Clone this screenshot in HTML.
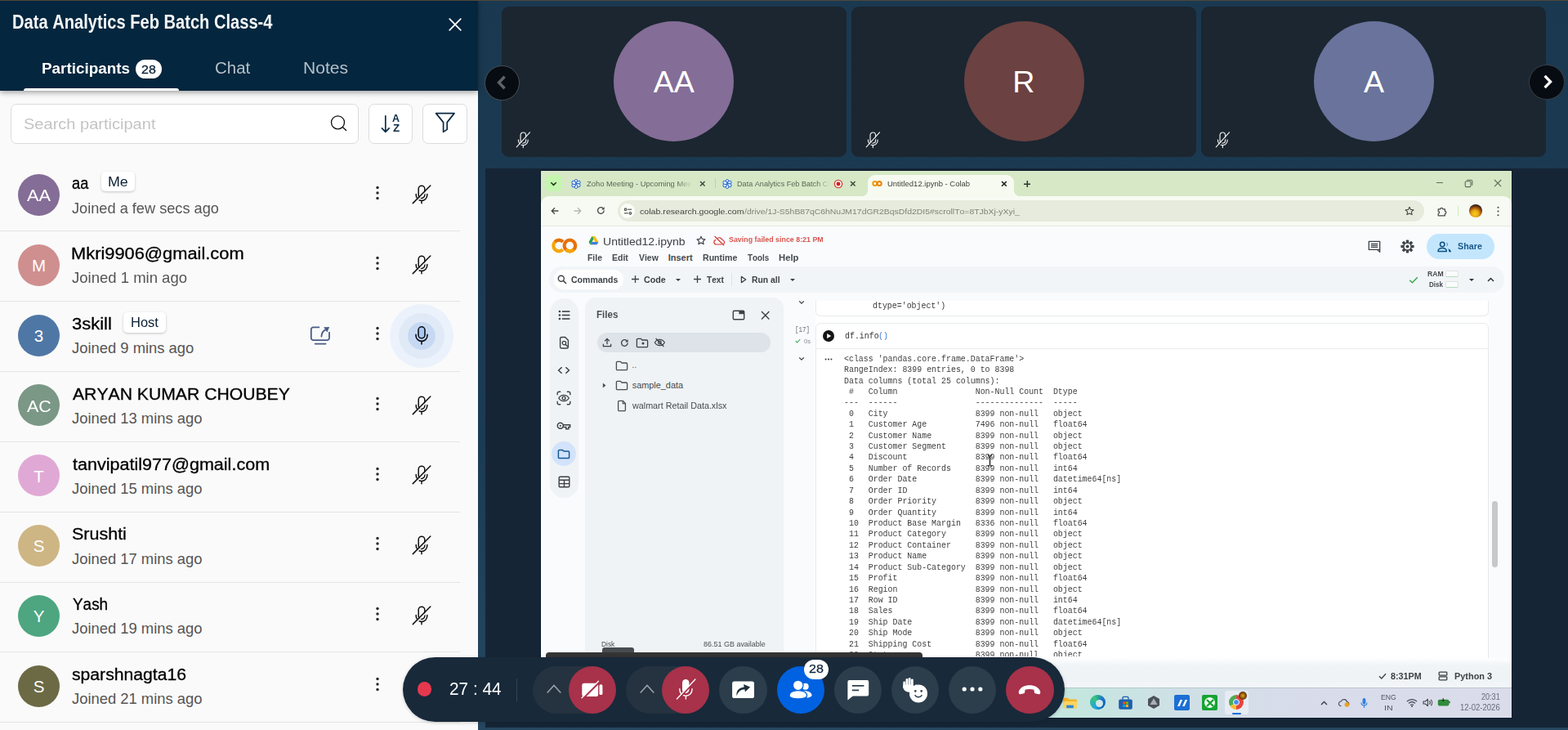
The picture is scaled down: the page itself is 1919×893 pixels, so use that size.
<!DOCTYPE html>
<html lang="en">
<head>
<meta charset="utf-8">
<title>Data Analytics Feb Batch Class-4</title>
<style>
*{margin:0;padding:0;box-sizing:content-box}
html,body{width:1919px;height:893px;overflow:hidden;background:#1b3b53}
body{position:relative;font-family:"Liberation Sans",sans-serif;font-kerning:none;-webkit-font-smoothing:antialiased}
.b{position:absolute;display:block}
.t{position:absolute;display:block;white-space:pre;font-weight:400;transform-origin:0 50%}
h1.t{font-weight:700}
#topline{position:absolute;left:0;top:0;width:1919px;height:1px;background:#51483a;z-index:50}
</style>
</head>
<body>
<div id="main">
<div class="b" style="left:585px;top:0px;width:1334px;height:893px;background:linear-gradient(180deg,#1a3950 0%,#1b3b53 60%,#254860 100%);"></div>
<div class="b" style="left:594px;top:206px;width:1325px;height:684px;background:#162536;"></div>
<div class="b" style="left:614px;top:8px;width:422px;height:184px;background:#1b2630;border-radius:9px;"></div>
<div class="b" style="left:751.2px;top:25.7px;width:147.2px;height:147.2px;background:#846d97;border-radius:50%;"></div>
<span class="t" style="left:799.72px;top:77.86px;font-size:37.6px;line-height:45px;color:#fff;">AA</span>
<svg class="b" style="left:629.68px;top:161.18px;" width="20.64" height="20.64" viewBox="0 0 24 24"><g fill="none" stroke="#f2f2f2" stroke-width="1.35" stroke-linecap="round"><rect x="8.2" y="1.2" width="7.6" height="15.2" rx="3.8"/><path d="M5.2 11.6v1a6.8 6.8 0 0 0 13.6 0v-1"/><path d="M12 19.6v3.2"/><path d="M20.6 2L3.6 21" stroke="#1b2630" stroke-width="1.55" stroke-linecap="butt" transform="translate(1.1 1.1)"/><path d="M21.6 1L2.6 22"/></g></svg>
<div class="b" style="left:1042px;top:8px;width:422px;height:184px;background:#1b2630;border-radius:9px;"></div>
<div class="b" style="left:1180px;top:25.7px;width:147.2px;height:147.2px;background:#6b4141;border-radius:50%;"></div>
<span class="t" style="left:1239.35px;top:77.86px;font-size:37.6px;line-height:45px;color:#fff;">R</span>
<svg class="b" style="left:1057.68px;top:161.18px;" width="20.64" height="20.64" viewBox="0 0 24 24"><g fill="none" stroke="#f2f2f2" stroke-width="1.35" stroke-linecap="round"><rect x="8.2" y="1.2" width="7.6" height="15.2" rx="3.8"/><path d="M5.2 11.6v1a6.8 6.8 0 0 0 13.6 0v-1"/><path d="M12 19.6v3.2"/><path d="M20.6 2L3.6 21" stroke="#1b2630" stroke-width="1.55" stroke-linecap="butt" transform="translate(1.1 1.1)"/><path d="M21.6 1L2.6 22"/></g></svg>
<div class="b" style="left:1470px;top:8px;width:422px;height:184px;background:#1b2630;border-radius:9px;"></div>
<div class="b" style="left:1608px;top:25.7px;width:147.2px;height:147.2px;background:#69739c;border-radius:50%;"></div>
<span class="t" style="left:1669.06px;top:77.86px;font-size:37.6px;line-height:45px;color:#fff;">A</span>
<svg class="b" style="left:1485.68px;top:161.18px;" width="20.64" height="20.64" viewBox="0 0 24 24"><g fill="none" stroke="#f2f2f2" stroke-width="1.35" stroke-linecap="round"><rect x="8.2" y="1.2" width="7.6" height="15.2" rx="3.8"/><path d="M5.2 11.6v1a6.8 6.8 0 0 0 13.6 0v-1"/><path d="M12 19.6v3.2"/><path d="M20.6 2L3.6 21" stroke="#1b2630" stroke-width="1.55" stroke-linecap="butt" transform="translate(1.1 1.1)"/><path d="M21.6 1L2.6 22"/></g></svg>
<div class="b" style="left:593.1px;top:79.6px;width:43.2px;height:43.2px;background:#070c12;border-radius:50%;border:1px solid #4a4f55;box-sizing:border-box;"></div>
<svg class="b" style="left:604px;top:91.2px;" width="20" height="20" viewBox="0 0 20 20"><path d="M13.6 2.8L6.6 10L13.6 17.2" fill="none" stroke="#606366" stroke-width="3.4"/></svg>
<div class="b" style="left:1871.4px;top:78.7px;width:43.2px;height:43.2px;background:#070c12;border-radius:50%;border:1px solid #3c4148;box-sizing:border-box;"></div>
<svg class="b" style="left:1883.6px;top:90.4px;" width="20" height="20" viewBox="0 0 20 20"><path d="M6.6 2.8L13.6 10L6.6 17.2" fill="none" stroke="#fff" stroke-width="3.3"/></svg>
</div>
<div id="screen">
<div class="b" style="left:661px;top:208px;width:1190px;height:671px;background:#0b1a2a;"></div>
<div class="b" style="left:662px;top:209px;width:1188px;height:669px;background:#f9fbfd;"></div>
<div class="b" style="left:662px;top:209px;width:1188px;height:40px;background:#d6e8c6;"></div>
<div class="b" style="left:667.7px;top:214.4px;width:20.2px;height:20px;background:#c5f6af;border-radius:5px;"></div>
<svg class="b" style="left:673.4px;top:221.8px;" width="9" height="6" viewBox="0 0 9 6"><path d="M1.3 1.2L4.5 4.4L7.7 1.2" fill="none" stroke="#1b3311" stroke-width="1.5"/></svg>
<svg class="b" style="left:699.2px;top:218.8px;" width="12" height="12" viewBox="0 0 12 12"><ellipse cx="6" cy="2.9" rx="1.9" ry="2.5" transform="rotate(0 6 6)" fill="#eaf2ff" stroke="#2f6fd0" stroke-width="1"/><ellipse cx="6" cy="2.9" rx="1.9" ry="2.5" transform="rotate(60 6 6)" fill="#eaf2ff" stroke="#2f6fd0" stroke-width="1"/><ellipse cx="6" cy="2.9" rx="1.9" ry="2.5" transform="rotate(120 6 6)" fill="#eaf2ff" stroke="#2f6fd0" stroke-width="1"/><ellipse cx="6" cy="2.9" rx="1.9" ry="2.5" transform="rotate(180 6 6)" fill="#eaf2ff" stroke="#2f6fd0" stroke-width="1"/><ellipse cx="6" cy="2.9" rx="1.9" ry="2.5" transform="rotate(240 6 6)" fill="#eaf2ff" stroke="#2f6fd0" stroke-width="1"/><ellipse cx="6" cy="2.9" rx="1.9" ry="2.5" transform="rotate(300 6 6)" fill="#eaf2ff" stroke="#2f6fd0" stroke-width="1"/></svg>
<span class="t" style="left:717.7px;top:220.05px;font-size:8.8px;line-height:11px;color:#596857;transform:scaleX(1.0654);-webkit-mask-image:linear-gradient(90deg,#000 86%,transparent 100%);">Zoho Meeting - Upcoming Mee</span>
<svg class="b" style="left:855.7px;top:221px;" width="7.6" height="7.6" viewBox="0 0 7.6 7.6"><path d="M1 1L6.6 6.6M6.6 1L1 6.6" stroke="#3c403c" stroke-width="1.4" fill="none"/></svg>
<div class="b" style="left:874.5px;top:218.4px;width:1.2px;height:12px;background:#b4d9a3;"></div>
<svg class="b" style="left:883.6px;top:218.8px;" width="12" height="12" viewBox="0 0 12 12"><ellipse cx="6" cy="2.9" rx="1.9" ry="2.5" transform="rotate(0 6 6)" fill="#eaf2ff" stroke="#2f6fd0" stroke-width="1"/><ellipse cx="6" cy="2.9" rx="1.9" ry="2.5" transform="rotate(60 6 6)" fill="#eaf2ff" stroke="#2f6fd0" stroke-width="1"/><ellipse cx="6" cy="2.9" rx="1.9" ry="2.5" transform="rotate(120 6 6)" fill="#eaf2ff" stroke="#2f6fd0" stroke-width="1"/><ellipse cx="6" cy="2.9" rx="1.9" ry="2.5" transform="rotate(180 6 6)" fill="#eaf2ff" stroke="#2f6fd0" stroke-width="1"/><ellipse cx="6" cy="2.9" rx="1.9" ry="2.5" transform="rotate(240 6 6)" fill="#eaf2ff" stroke="#2f6fd0" stroke-width="1"/><ellipse cx="6" cy="2.9" rx="1.9" ry="2.5" transform="rotate(300 6 6)" fill="#eaf2ff" stroke="#2f6fd0" stroke-width="1"/></svg>
<span class="t" style="left:901.85px;top:220.05px;font-size:8.8px;line-height:11px;color:#596857;transform:scaleX(1.0347);-webkit-mask-image:linear-gradient(90deg,#000 86%,transparent 100%);">Data Analytics Feb Batch Cl</span>
<svg class="b" style="left:1019.8px;top:218.8px;" width="12" height="12" viewBox="0 0 12 12"><circle cx="6" cy="6" r="4.7" fill="#fbeceb" stroke="#d3322c" stroke-width="1.1"/><circle cx="6" cy="6" r="2.4" fill="#d3201a"/></svg>
<svg class="b" style="left:1040.3px;top:221px;" width="7.6" height="7.6" viewBox="0 0 7.6 7.6"><path d="M1 1L6.6 6.6M6.6 1L1 6.6" stroke="#3c403c" stroke-width="1.4" fill="none"/></svg>
<div class="b" style="left:1061.6px;top:213.7px;width:179.6px;height:30px;background:#f6faf0;border-radius:9px 9px 0 0;"></div>
<div class="b" style="left:1054.6px;top:233.2px;width:7px;height:7px;background:radial-gradient(circle at 0 0,rgba(246,250,240,0) 6.6px,#f6faf0 7.2px);"></div>
<div class="b" style="left:1241.2px;top:233.2px;width:7px;height:7px;background:radial-gradient(circle at 100% 0,rgba(246,250,240,0) 6.6px,#f6faf0 7.2px);"></div>
<svg class="b" style="left:1067.2px;top:221.3px;" width="13" height="7" viewBox="0 0 13 7"><g fill="none" stroke-width="2"><circle cx="3.8" cy="3.5" r="2.5" stroke="#f29900"/><circle cx="9.2" cy="3.5" r="2.5" stroke="#ee8100"/></g></svg>
<span class="t" style="left:1085.57px;top:220.05px;font-size:8.8px;line-height:11px;color:#3b403b;transform:scaleX(1.0767);">Untitled12.ipynb - Colab</span>
<svg class="b" style="left:1224.5px;top:220.9px;" width="7.8" height="7.8" viewBox="0 0 7.8 7.8"><path d="M1 1L6.8 6.8M6.8 1L1 6.8" stroke="#222" stroke-width="1.6" fill="none"/></svg>
<svg class="b" style="left:1252.5px;top:220.5px;" width="8.6" height="8.6" viewBox="0 0 8.6 8.6"><path d="M4.3 0V8.6M0 4.3H8.6" stroke="#2e332e" stroke-width="1.5" fill="none"/></svg>
<div class="b" style="left:1757.6px;top:223px;width:8.6px;height:1.1px;background:#5f6b5a;"></div>
<svg class="b" style="left:1791.5px;top:218.8px;" width="11" height="11" viewBox="0 0 11 11"><rect x="1.2" y="2.8" width="6.8" height="6.8" rx="1.4" fill="none" stroke="#5f6b5a" stroke-width="1.1"/><path d="M3.2 1.2h5a1.6 1.6 0 0 1 1.6 1.6v5" fill="none" stroke="#5f6b5a" stroke-width="1.1"/></svg>
<svg class="b" style="left:1827.6px;top:219.3px;" width="10.2" height="10.2" viewBox="0 0 10.2 10.2"><path d="M1 1L9.2 9.2M9.2 1L1 9.2" stroke="#5f6b5a" stroke-width="1.1" fill="none"/></svg>
<div class="b" style="left:662px;top:240.2px;width:1188px;height:36px;background:#f7faf3;border-radius:10px 10px 0 0;"></div>
<svg class="b" style="left:674.3px;top:252.9px;" width="10" height="10" viewBox="0 0 10 10"><path d="M9.4 5H1.4M5 1.2L1.2 5L5 8.8" fill="none" stroke="#454a45" stroke-width="1.3"/></svg>
<svg class="b" style="left:701.8px;top:252.9px;" width="10" height="10" viewBox="0 0 10 10"><path d="M.6 5H8.6M5 1.2L8.8 5L5 8.8" fill="none" stroke="#b3b8b0" stroke-width="1.3"/></svg>
<svg class="b" style="left:729.5px;top:252.2px;" width="11" height="11" viewBox="0 0 11 11"><path d="M9.2 5.6a3.8 3.8 0 1 1-1.2-2.9" fill="none" stroke="#454a45" stroke-width="1.3"/><path d="M9.6 1v3.4H6.2z" fill="#454a45"/></svg>
<div class="b" style="left:755.8px;top:244.9px;width:987.4px;height:26.2px;background:#e6ebdd;border-radius:13.1px;"></div>
<div class="b" style="left:758.9px;top:248.8px;width:18.4px;height:18.4px;background:#fafcf6;border-radius:50%;"></div>
<svg class="b" style="left:762.6px;top:253.5px;" width="11" height="9" viewBox="0 0 11 9"><g fill="none" stroke="#454a45" stroke-width="1.1"><circle cx="2.6" cy="2.2" r="1.3"/><path d="M5.2 2.2H10"/><circle cx="8.4" cy="6.8" r="1.3"/><path d="M1 6.8H5.8"/></g></svg>
<span class="t" style="left:783.45px;top:253.1px;font-size:9.8px;line-height:12px;color:#3f443d;transform:scaleX(1.084);">colab.research.google.com</span>
<span class="t" style="left:911px;top:253.1px;font-size:9.8px;line-height:12px;color:#7d8678;transform:scaleX(1.0636);">/drive/1J-S5hB87qC6hNuJM17dGR2BqsDfd2DI5#scrollTo=8TJbXj-yXyi_</span>
<svg class="b" style="left:1719.2px;top:252.1px;" width="12" height="12" viewBox="0 0 12 12"><path d="M6 1.2l1.5 3.2 3.5.4-2.6 2.4.7 3.4L6 8.9 2.9 10.6l.7-3.4L1 4.8l3.5-.4z" fill="none" stroke="#454a45" stroke-width="1.1" stroke-linejoin="round"/></svg>
<svg class="b" style="left:1758.1px;top:251.8px;" width="13" height="13" viewBox="0 0 13 13"><path d="M2.2 3.8h2.6a1.5 1.5 0 0 1 3 0h2.6v2.6a1.5 1.5 0 0 1 0 3v2.4H2.2V9.2a1.4 1.4 0 0 0 0-2.8z" fill="none" stroke="#454a45" stroke-width="1.2" stroke-linejoin="round"/></svg>
<div class="b" style="left:1784.3px;top:252.4px;width:1.2px;height:11.4px;background:#c6f0b3;"></div>
<div class="b" style="left:1797.7px;top:249.7px;width:16.2px;height:16.2px;background:radial-gradient(circle at 45% 72%,#f2d21c 0%,#e9a514 30%,#a3540f 52%,#2a1b13 75%,#15110f 100%);border-radius:50%;"></div>
<svg class="b" style="left:1832px;top:251.5px;" width="3" height="13" viewBox="0 0 3 13"><g fill="#454a45"><circle cx="1.5" cy="1.7" r="1.05"/><circle cx="1.5" cy="6.5" r="1.05"/><circle cx="1.5" cy="11.3" r="1.05"/></g></svg>
<div class="b" style="left:662px;top:276px;width:1188px;height:1px;background:#e4e9df;"></div>
<svg class="b" style="left:674.8px;top:290.5px;" width="32" height="19" viewBox="0 0 32 19"><g fill="none" stroke-width="4.2"><path d="M13.9 4.7a6.8 6.8 0 1 0 0 9.6" stroke="#f6a609"/><path d="M4.4 4.7a6.8 6.8 0 0 1 9.5 0" stroke="#e8710a"/><circle cx="22.4" cy="9.5" r="6.8" stroke="#e8710a"/><path d="M17.6 14.3a6.8 6.8 0 0 0 9.6 0" stroke="#f6a609"/></g></svg>
<svg class="b" style="left:720px;top:287.5px;" width="13" height="12" viewBox="0 0 13 12"><path d="M4.6 1h3.8l4 7-1.9 3.2H2.5L.6 8z" fill="#f9bd14"/><path d="M4.6 1L.6 8l1.9 3.2 4-7z" fill="#1ea362"/><path d="M2.5 11.2h8L12.4 8H4.4z" fill="#3f7fe8"/><path d="M6.5 4.6L4.7 7.8h3.6z" fill="#fdfefe"/></svg>
<span class="t" style="left:737.52px;top:287.53px;font-size:12.9px;line-height:15px;color:#3d4145;transform:scaleX(1.0882);">Untitled12.ipynb</span>
<svg class="b" style="left:852.4px;top:288px;" width="12" height="12" viewBox="0 0 12 12"><path d="M6 1.2l1.5 3.2 3.5.4-2.6 2.4.7 3.4L6 8.9 2.9 10.6l.7-3.4L1 4.8l3.5-.4z" fill="none" stroke="#454a4f" stroke-width="1.2" stroke-linejoin="round"/></svg>
<svg class="b" style="left:873.2px;top:287.7px;" width="15" height="13" viewBox="0 0 15 13"><g fill="none" stroke="#d7372e" stroke-width="1.2"><path d="M4.3 4.2a3.8 3.8 0 0 1 6.6 1.3 2.8 2.8 0 0 1 1.4 5.1M10.6 11H4a2.9 2.9 0 0 1-.9-5.7"/><path d="M1.6 1L13 12.2"/></g></svg>
<span class="t" style="left:891.54px;top:287.34px;font-size:9.7px;line-height:12px;color:#d8483f;font-weight:700;transform:scaleX(0.9144);opacity:.92;">Saving failed since 8:21 PM</span>
<span class="t" style="left:719.2px;top:308.79px;font-size:11px;line-height:13px;color:#45494d;font-weight:700;transform:scaleX(0.9474);">File</span>
<span class="t" style="left:749.2px;top:308.79px;font-size:11px;line-height:13px;color:#45494d;font-weight:700;transform:scaleX(0.9545);">Edit</span>
<span class="t" style="left:781.83px;top:308.79px;font-size:11px;line-height:13px;color:#45494d;font-weight:700;transform:scaleX(0.9475);">View</span>
<span class="t" style="left:817.67px;top:308.79px;font-size:11px;line-height:13px;color:#45494d;font-weight:700;">Insert</span>
<span class="t" style="left:859.89px;top:308.79px;font-size:11px;line-height:13px;color:#45494d;font-weight:700;transform:scaleX(0.9606);">Runtime</span>
<span class="t" style="left:915.09px;top:308.79px;font-size:11px;line-height:13px;color:#45494d;font-weight:700;transform:scaleX(0.8937);">Tools</span>
<span class="t" style="left:953.05px;top:308.79px;font-size:11px;line-height:13px;color:#45494d;font-weight:700;transform:scaleX(1.0243);">Help</span>
<svg class="b" style="left:1673.8px;top:293.7px;" width="16" height="15" viewBox="0 0 16 15"><path d="M1.3 1.4h13.4v10H11.6l3.1 3V11.4H1.3z" fill="none" stroke="#3f4449" stroke-width="1.3" stroke-linejoin="round"/><path d="M3.8 4.4h8.4M3.8 6.4h8.4M3.8 8.4h8.4" stroke="#3f4449" stroke-width="1.1"/></svg>
<svg class="b" style="left:1713.6px;top:293px;" width="17" height="17" viewBox="0 0 17 17"><rect x="6.8" y="0.4" width="3.4" height="3.6" rx=".8" transform="rotate(0 8.5 8.5)" fill="#3f4449"/><rect x="6.8" y="0.4" width="3.4" height="3.6" rx=".8" transform="rotate(45 8.5 8.5)" fill="#3f4449"/><rect x="6.8" y="0.4" width="3.4" height="3.6" rx=".8" transform="rotate(90 8.5 8.5)" fill="#3f4449"/><rect x="6.8" y="0.4" width="3.4" height="3.6" rx=".8" transform="rotate(135 8.5 8.5)" fill="#3f4449"/><rect x="6.8" y="0.4" width="3.4" height="3.6" rx=".8" transform="rotate(180 8.5 8.5)" fill="#3f4449"/><rect x="6.8" y="0.4" width="3.4" height="3.6" rx=".8" transform="rotate(225 8.5 8.5)" fill="#3f4449"/><rect x="6.8" y="0.4" width="3.4" height="3.6" rx=".8" transform="rotate(270 8.5 8.5)" fill="#3f4449"/><rect x="6.8" y="0.4" width="3.4" height="3.6" rx=".8" transform="rotate(315 8.5 8.5)" fill="#3f4449"/><circle cx="8.5" cy="8.5" r="5.3" fill="#3f4449"/><circle cx="8.5" cy="8.5" r="3.8" fill="#fdfefe"/><circle cx="8.5" cy="8.5" r="2" fill="#3f4449"/></svg>
<div class="b" style="left:1746.4px;top:286.2px;width:82.8px;height:30.6px;background:#c3e6fd;border-radius:15.3px;"></div>
<svg class="b" style="left:1759.2px;top:294.6px;" width="18" height="14" viewBox="0 0 18 14"><g fill="none" stroke="#0e5182" stroke-width="1.5"><circle cx="6.2" cy="4" r="2.7"/><path d="M1 12.4c0-2.6 2.3-4 5.2-4s5.2 1.4 5.2 4z" stroke-linejoin="round"/></g><path d="M11 1.4a2.9 2.9 0 0 1 0 5.3 4.4 4.4 0 0 0 0-5.3zM13.2 9.2c2 .5 3.6 1.6 3.6 3.3v.7h-2.6v-.7c0-1.3-.3-2.4-1-3.3z" fill="#0e5182"/></svg>
<span class="t" style="left:1783.89px;top:294.25px;font-size:11.4px;line-height:14px;color:#1a5a8c;font-weight:700;transform:scaleX(0.943);">Share</span>
<div class="b" style="left:672px;top:326px;width:1168.6px;height:32.2px;background:#f2f5f8;border-radius:15px;"></div>
<div class="b" style="left:678px;top:329.7px;width:84.5px;height:24px;background:#fefefe;border-radius:12px;"></div>
<svg class="b" style="left:682.2px;top:335.8px;" width="12" height="12" viewBox="0 0 12 12"><circle cx="4.8" cy="4.8" r="3.5" fill="none" stroke="#3d4145" stroke-width="1.4"/><path d="M7.4 7.4L11 11" stroke="#3d4145" stroke-width="1.5"/></svg>
<span class="t" style="left:699.37px;top:335.92px;font-size:11.2px;line-height:13px;color:#3d4145;font-weight:700;transform:scaleX(0.9406);">Commands</span>
<svg class="b" style="left:772.5px;top:337.1px;" width="9" height="9" viewBox="0 0 9 9"><path d="M4.5 0V9M0 4.5H9" stroke="#3d4145" stroke-width="1.3" fill="none"/></svg>
<span class="t" style="left:787.66px;top:335.92px;font-size:11.2px;line-height:13px;color:#3d4145;font-weight:700;transform:scaleX(0.9574);">Code</span>
<svg class="b" style="left:827.2px;top:340.9px;" width="6" height="3" viewBox="0 0 6 3"><path d="M0 0H6L3 3z" fill="#3c4043"/></svg>
<svg class="b" style="left:848.7px;top:337.1px;" width="9" height="9" viewBox="0 0 9 9"><path d="M4.5 0V9M0 4.5H9" stroke="#3d4145" stroke-width="1.3" fill="none"/></svg>
<span class="t" style="left:865.09px;top:335.92px;font-size:11.2px;line-height:13px;color:#3d4145;font-weight:700;transform:scaleX(0.9048);">Text</span>
<div class="b" style="left:895px;top:334px;width:1px;height:16px;background:#dfe3e8;"></div>
<svg class="b" style="left:906px;top:337px;" width="8" height="10" viewBox="0 0 8 10"><path d="M1.4 1.4L6.8 5L1.4 8.6z" fill="none" stroke="#3d4145" stroke-width="1.3" stroke-linejoin="round"/></svg>
<span class="t" style="left:920.31px;top:335.92px;font-size:11.2px;line-height:13px;color:#3d4145;font-weight:700;transform:scaleX(0.9276);">Run all</span>
<svg class="b" style="left:966.8px;top:340.9px;" width="6" height="3" viewBox="0 0 6 3"><path d="M0 0H6L3 3z" fill="#3c4043"/></svg>
<svg class="b" style="left:1724.2px;top:337.5px;" width="12" height="9" viewBox="0 0 12 9"><path d="M1.2 4.8L4.4 7.8L10.8 1.2" fill="none" stroke="#34a853" stroke-width="1.5"/></svg>
<span class="t" style="left:1746.63px;top:330.22px;font-size:8.3px;line-height:10px;color:#45494e;font-weight:700;transform:scaleX(1.0342);">RAM</span>
<span class="t" style="left:1748.66px;top:342.72px;font-size:8.3px;line-height:10px;color:#45494e;font-weight:700;transform:scaleX(0.9656);">Disk</span>
<div class="b" style="left:1769px;top:331.2px;width:16.4px;height:8.2px;background:#fafcfb;border-radius:1.5px;box-sizing:border-box;border:1px solid #e0e3e2;border-bottom:1.5px solid #b5dcbc;"></div>
<div class="b" style="left:1769px;top:343.7px;width:16.4px;height:8.6px;background:#fafcfb;border-radius:1.5px;box-sizing:border-box;border:1px solid #e0e3e2;border-bottom:1.5px solid #b5dcbc;"></div>
<svg class="b" style="left:1798px;top:340.7px;" width="6" height="3" viewBox="0 0 6 3"><path d="M0 0H6L3 3z" fill="#2d3135"/></svg>
<svg class="b" style="left:1820.1px;top:339px;" width="9" height="6" viewBox="0 0 9 6"><path d="M1 5L4.5 1.5L8 5" fill="none" stroke="#2d3135" stroke-width="1.5"/></svg>
<div class="b" style="left:672.6px;top:365px;width:35.6px;height:244px;background:#eff3f5;border-radius:17.8px;"></div>
<svg class="b" style="left:682.6px;top:378.5px;" width="15" height="13" viewBox="0 0 15 13"><g fill="#3d4145"><circle cx="1.9" cy="2" r="1.3"/><circle cx="1.9" cy="6.5" r="1.3"/><circle cx="1.9" cy="11" r="1.3"/><rect x="4.8" y="1.2" width="9.6" height="1.6"/><rect x="4.8" y="5.7" width="9.6" height="1.6"/><rect x="4.8" y="10.2" width="9.6" height="1.6"/></g></svg>
<svg class="b" style="left:683.5px;top:410.9px;" width="13" height="16" viewBox="0 0 13 16"><path d="M1.6 3a1.5 1.5 0 0 1 1.5-1.5h4.6l3.7 3.7v8.3a1.5 1.5 0 0 1-1.5 1.5H3.1a1.5 1.5 0 0 1-1.5-1.5z" fill="none" stroke="#3d4145" stroke-width="1.4"/><circle cx="6.4" cy="8.6" r="2.2" fill="none" stroke="#3d4145" stroke-width="1.3"/><path d="M8 10.2l3 3" stroke="#3d4145" stroke-width="1.4"/></svg>
<svg class="b" style="left:682px;top:448px;" width="16" height="10" viewBox="0 0 16 10"><path d="M5.6 1.2L1.6 5l4 3.8M10.4 1.2l4 3.8-4 3.8" fill="none" stroke="#3d4145" stroke-width="1.5"/></svg>
<svg class="b" style="left:681px;top:478px;" width="18" height="18" viewBox="0 0 18 18"><g fill="none" stroke="#3d4145" stroke-width="1.4"><path d="M1.2 5.2V3a1.8 1.8 0 0 1 1.8-1.8h2.2M12.8 1.2H15A1.8 1.8 0 0 1 16.8 3v2.2M16.8 12.8V15a1.8 1.8 0 0 1-1.8 1.8h-2.2M5.2 16.8H3A1.8 1.8 0 0 1 1.2 15v-2.2"/><path d="M2.8 9c1.4-2.4 3.6-3.6 6.2-3.6s4.8 1.2 6.2 3.6c-1.4 2.4-3.6 3.6-6.2 3.6S4.2 11.4 2.8 9z"/><circle cx="9" cy="9" r="1.9"/></g></svg>
<svg class="b" style="left:681px;top:516.4px;" width="18" height="10" viewBox="0 0 18 10"><g fill="none" stroke="#3d4145" stroke-width="1.5"><circle cx="4.8" cy="4.8" r="3.5"/><path d="M8.3 3.8h8.3v2.6h-1.8v2.4h-3V6.4H8.3"/></g><circle cx="4.8" cy="4.8" r="1.1" fill="#3d4145"/></svg>
<div class="b" style="left:674.9px;top:540px;width:30.2px;height:30.2px;background:#d3e3fc;border-radius:50%;"></div>
<svg class="b" style="left:682px;top:548.6px;" width="16" height="13" viewBox="0 0 16 13"><path d="M1.4 2.6a1.2 1.2 0 0 1 1.2-1.2h3.8l1.6 1.6h5.4a1.2 1.2 0 0 1 1.2 1.2v6.2a1.2 1.2 0 0 1-1.2 1.2H2.6a1.2 1.2 0 0 1-1.2-1.2z" fill="none" stroke="#175a94" stroke-width="1.5"/></svg>
<svg class="b" style="left:682.5px;top:581.9px;" width="15" height="15" viewBox="0 0 15 15"><g fill="none" stroke="#3d4145" stroke-width="1.4"><rect x="1.2" y="1.2" width="12.6" height="12.6" rx="1.2"/><path d="M1.2 5.2h12.6M1.2 9.6h12.6M7.5 5.2v8.6"/></g></svg>
<div class="b" style="left:716px;top:364.3px;width:242.6px;height:441.2px;background:#eff3f5;border-radius:13px 13px 0 0;"></div>
<span class="t" style="left:729.92px;top:377.77px;font-size:12.2px;line-height:15px;color:#4a4e52;font-weight:700;transform:scaleX(0.9515);">Files</span>
<svg class="b" style="left:896.4px;top:378.8px;" width="16" height="13" viewBox="0 0 16 13"><rect x="1.3" y="1.3" width="13.4" height="10.4" rx="1.2" fill="none" stroke="#3d4145" stroke-width="1.4"/><rect x="8.4" y="1.6" width="6" height="3.6" fill="#3d4145"/></svg>
<svg class="b" style="left:931.3px;top:379.6px;" width="11.4" height="11.4" viewBox="0 0 11.4 11.4"><path d="M1 1L10.4 10.4M10.4 1L1 10.4" stroke="#3d4145" stroke-width="1.4" fill="none"/></svg>
<div class="b" style="left:730.6px;top:407.1px;width:212.6px;height:24.4px;background:#dde3e8;border-radius:12.2px;"></div>
<svg class="b" style="left:736.7px;top:413.3px;" width="12" height="12" viewBox="0 0 12 12"><g fill="none" stroke="#3d4145" stroke-width="1.3"><path d="M6 8.2V1.6M3.2 4.2L6 1.4l2.8 2.8M1.4 7.8v2.8h9.2V7.8"/></g></svg>
<svg class="b" style="left:758.9px;top:413.8px;" width="11" height="11" viewBox="0 0 11 11"><path d="M9.2 5.6a3.8 3.8 0 1 1-1.2-2.9" fill="none" stroke="#3d4145" stroke-width="1.3"/><path d="M9.6 1v3.4H6.2z" fill="#3d4145"/></svg>
<svg class="b" style="left:778.2px;top:412.8px;" width="16" height="13" viewBox="0 0 16 13"><path d="M1.4 2.6a1.2 1.2 0 0 1 1.2-1.2h3.8l1.6 1.6h5.4a1.2 1.2 0 0 1 1.2 1.2v6.2a1.2 1.2 0 0 1-1.2 1.2H2.6a1.2 1.2 0 0 1-1.2-1.2z" fill="none" stroke="#3d4145" stroke-width="1.3"/></svg>
<svg class="b" style="left:784.8px;top:418.3px;" width="4" height="4" viewBox="0 0 4 4"><circle cx="2" cy="2" r="1.5" fill="#3d4145"/></svg>
<svg class="b" style="left:800.3px;top:413.3px;" width="15" height="12" viewBox="0 0 15 12"><g fill="none" stroke="#3d4145" stroke-width="1.2"><path d="M1.4 6c1.4-2.4 3.4-3.6 6-3.6s4.6 1.2 6 3.6c-1.4 2.4-3.4 3.6-6 3.6S2.8 8.4 1.4 6z"/><circle cx="7.4" cy="6" r="1.8"/><path d="M2.6 1L12.4 11"/></g></svg>
<svg class="b" style="left:753.2px;top:440.6px;" width="16" height="13" viewBox="0 0 16 13"><path d="M1.4 2.6a1.2 1.2 0 0 1 1.2-1.2h3.8l1.6 1.6h5.4a1.2 1.2 0 0 1 1.2 1.2v6.2a1.2 1.2 0 0 1-1.2 1.2H2.6a1.2 1.2 0 0 1-1.2-1.2z" fill="none" stroke="#4a4e52" stroke-width="1.3"/></svg>
<span class="t" style="left:773.34px;top:440.46px;font-size:10.5px;line-height:13px;color:#5a5e62;">..</span>
<svg class="b" style="left:737.4px;top:468.3px;" width="5" height="7" viewBox="0 0 5 7"><path d="M.8.6L4.4 3.5L.8 6.4z" fill="#4a4e52"/></svg>
<svg class="b" style="left:753.2px;top:465.1px;" width="16" height="13" viewBox="0 0 16 13"><path d="M1.4 2.6a1.2 1.2 0 0 1 1.2-1.2h3.8l1.6 1.6h5.4a1.2 1.2 0 0 1 1.2 1.2v6.2a1.2 1.2 0 0 1-1.2 1.2H2.6a1.2 1.2 0 0 1-1.2-1.2z" fill="none" stroke="#4a4e52" stroke-width="1.3"/></svg>
<span class="t" style="left:773.7px;top:465.02px;font-size:10.9px;line-height:13px;color:#45494d;">sample_data</span>
<svg class="b" style="left:755.4px;top:488.7px;" width="12" height="15" viewBox="0 0 12 15"><path d="M1.6 2.6a1.2 1.2 0 0 1 1.2-1.2h4.6l3 3v8a1.2 1.2 0 0 1-1.2 1.2H2.8a1.2 1.2 0 0 1-1.2-1.2z" fill="none" stroke="#4a4e52" stroke-width="1.3"/><path d="M7.2 1.6v3h3" fill="none" stroke="#4a4e52" stroke-width="1.1"/></svg>
<span class="t" style="left:774.02px;top:489.62px;font-size:10.9px;line-height:13px;color:#45494d;transform:scaleX(0.988);">walmart Retail Data.xlsx</span>
<span class="t" style="left:736.11px;top:781.94px;font-size:9.4px;line-height:11px;color:#4a4e52;transform:scaleX(0.8904);">Disk</span>
<span class="t" style="left:860.81px;top:781.94px;font-size:9.4px;line-height:11px;color:#4a4e52;transform:scaleX(0.9567);">86.51 GB available</span>
<div class="b" style="left:736.6px;top:792.4px;width:39.4px;height:6px;background:#474c51;border-radius:3px 3px 0 0;"></div>
<div class="b" style="left:998.2px;top:367.6px;width:824px;height:438.4px;background:#fff;"></div>
<div class="b" style="left:998.2px;top:367.6px;width:824px;height:19.2px;background:#fff;border-radius:0 0 6px 6px;border:1px solid #e8eaec;border-top:0;box-sizing:border-box;"></div>
<svg class="b" style="left:977.3px;top:367.3px;" width="8" height="6" viewBox="0 0 8 6"><path d="M1.2 1.4L4 4.2L6.8 1.4" fill="none" stroke="#3d4145" stroke-width="1.3"/></svg>
<span class="t" style="left:1068.33px;top:368.33px;font-size:10.8px;line-height:13px;color:#3a3a3a;font-family:'Liberation Mono',monospace;transform:scaleX(0.9185);">dtype='object')</span>
<div class="b" style="left:998.2px;top:395.2px;width:824px;height:31.6px;background:#fff;border-radius:6px 6px 0 0;border:1px solid #e8eaec;box-sizing:border-box;"></div>
<div class="b" style="left:998.2px;top:426px;width:1px;height:380px;background:#e8eaed;"></div>
<div class="b" style="left:1821.2px;top:426px;width:1px;height:380px;background:#e6e8ea;"></div>
<div class="b" style="left:1006.8px;top:403.7px;width:14.4px;height:14.4px;background:#151515;border-radius:50%;"></div>
<svg class="b" style="left:1011px;top:406.9px;" width="7" height="8" viewBox="0 0 7 8"><path d="M1.2 1L6.2 4L1.2 7z" fill="#fff"/></svg>
<span class="t" style="left:1033.73px;top:405.33px;font-size:10.8px;line-height:13px;color:#333;font-family:'Liberation Mono',monospace;transform:scaleX(0.9185);">df.info</span>
<span class="t" style="left:1074.74px;top:405.33px;font-size:10.8px;line-height:13px;color:#3b78d8;font-family:'Liberation Mono',monospace;transform:scaleX(0.9185);">()</span>
<span class="t" style="left:972.7px;top:398.76px;font-size:8.4px;line-height:10px;color:#6b6f73;font-family:'Liberation Mono',monospace;transform:scaleX(0.8933);">[17]</span>
<svg class="b" style="left:973px;top:414px;" width="7" height="6" viewBox="0 0 7 6"><path d="M.8 3.2L2.6 5L6.2 1" fill="none" stroke="#34a853" stroke-width="1.1"/></svg>
<span class="t" style="left:984.3px;top:412.63px;font-size:7.4px;line-height:9px;color:#8a8e92;transform:scaleX(1.047);">0s</span>
<svg class="b" style="left:977.3px;top:436px;" width="8" height="6" viewBox="0 0 8 6"><path d="M1.2 1.4L4 4.2L6.8 1.4" fill="none" stroke="#3d4145" stroke-width="1.3"/></svg>
<svg class="b" style="left:1009px;top:438.1px;" width="10" height="3" viewBox="0 0 10 3"><g fill="#3d4145"><circle cx="1.6" cy="1.5" r="1.05"/><circle cx="5" cy="1.5" r="1.05"/><circle cx="8.4" cy="1.5" r="1.05"/></g></svg>
<pre class="b" style="left:1033.3px;top:432.7px;font-family:'Liberation Mono',monospace;font-size:10.8px;line-height:13.42px;color:#404040;margin:0;height:370px;width:420px;overflow:hidden;transform:scaleX(.9185);transform-origin:0 0;">&lt;class 'pandas.core.frame.DataFrame'&gt;
RangeIndex: 8399 entries, 0 to 8398
Data columns (total 25 columns):
 #   Column                Non-Null Count  Dtype
---  ------                --------------  -----
 0   City                  8399 non-null   object
 1   Customer Age          7496 non-null   float64
 2   Customer Name         8399 non-null   object
 3   Customer Segment      8399 non-null   object
 4   Discount              8399 non-null   float64
 5   Number of Records     8399 non-null   int64
 6   Order Date            8399 non-null   datetime64[ns]
 7   Order ID              8399 non-null   int64
 8   Order Priority        8399 non-null   object
 9   Order Quantity        8399 non-null   int64
 10  Product Base Margin   8336 non-null   float64
 11  Product Category      8399 non-null   object
 12  Product Container     8399 non-null   object
 13  Product Name          8399 non-null   object
 14  Product Sub-Category  8399 non-null   object
 15  Profit                8399 non-null   float64
 16  Region                8399 non-null   object
 17  Row ID                8399 non-null   int64
 18  Sales                 8399 non-null   float64
 19  Ship Date             8399 non-null   datetime64[ns]
 20  Ship Mode             8399 non-null   object
 21  Shipping Cost         8399 non-null   float64
 22  State                 8399 non-null   object</pre>
<svg class="b" style="left:1207.5px;top:556px;" width="7" height="15" viewBox="0 0 7 15"><path d="M.8 1h2.2M4 1h2.2M.8 14h2.2M4 14h2.2M3.5 1.4V13.6" fill="none" stroke="#2a2a2a" stroke-width="1.5"/></svg>
<div class="b" style="left:1825.8px;top:613.2px;width:6.8px;height:80.8px;background:#c8c8c8;border-radius:3.4px;"></div>
<div class="b" style="left:668.4px;top:797.9px;width:461px;height:9px;background:#343434;border-radius:4px 4px 0 0;"></div>
<div class="b" style="left:662px;top:805px;width:1188px;height:36.2px;background:linear-gradient(180deg,#fefefe 0%,#f0f4f6 26%,#eff3f6 70%,#f3f5f9 100%);"></div>
<svg class="b" style="left:1687px;top:823.3px;" width="10" height="8" viewBox="0 0 10 8"><path d="M1 4.2L3.8 7L9 1.2" fill="none" stroke="#3d4145" stroke-width="1.3"/></svg>
<span class="t" style="left:1702.46px;top:821.02px;font-size:10.6px;line-height:13px;color:#3d4145;font-weight:700;transform:scaleX(1.0147);">8:31PM</span>
<svg class="b" style="left:1760.4px;top:821.3px;" width="12" height="12" viewBox="0 0 12 12"><g fill="none" stroke="#3d4145" stroke-width="1.3"><rect x="1.2" y="1.2" width="9.6" height="4" rx=".8"/><rect x="1.2" y="6.8" width="9.6" height="4" rx=".8"/></g></svg>
<span class="t" style="left:1779.87px;top:821.02px;font-size:10.6px;line-height:13px;color:#3d4145;font-weight:700;transform:scaleX(1.0305);">Python 3</span>
<div class="b" style="left:662px;top:841px;width:1188px;height:37px;background:linear-gradient(90deg,#cde4e6 0%,#c4e6de 54%,#cfe0e6 66%,#d8dcea 78%,#dadcea 100%);box-shadow:inset 0 1px 0 rgba(150,170,175,.45);"></div>
<svg class="b" style="left:1299.5px;top:851.5px;" width="19" height="16" viewBox="0 0 19 16"><path d="M1 3a1.2 1.2 0 0 1 1.2-1.2h5l1.8 1.8h7.8A1.2 1.2 0 0 1 18 4.8V13a1.2 1.2 0 0 1-1.2 1.2H2.2A1.2 1.2 0 0 1 1 13z" fill="#f3b62b"/><rect x="1" y="6" width="17" height="8.2" rx="1.2" fill="#fbd460"/><rect x="5.2" y="10.6" width="8.6" height="3.6" fill="#2d86d8"/></svg>
<div class="b" style="left:1334.3px;top:849.9px;width:18.6px;height:18.6px;background:conic-gradient(from 200deg,#1fa4dd,#39c57a 35%,#1b74c9 60%,#0f5db0 80%,#1fa4dd);border-radius:50%;"></div>
<div class="b" style="left:1341px;top:856px;width:9.2px;height:9.2px;background:#d3e7ea;border-radius:50%;"></div>
<svg class="b" style="left:1367.9px;top:850.6px;" width="19" height="18" viewBox="0 0 19 18"><rect x="1.2" y="4.4" width="16.6" height="12.4" rx="2" fill="#1d5fae"/><path d="M6 4.4V3a1.6 1.6 0 0 1 1.6-1.6h3.8A1.6 1.6 0 0 1 13 3v1.4" fill="none" stroke="#1d5fae" stroke-width="1.4"/><rect x="6.2" y="7.4" width="3" height="3" fill="#f25022"/><rect x="9.8" y="7.4" width="3" height="3" fill="#7fba00"/><rect x="6.2" y="11" width="3" height="3" fill="#00a4ef"/><rect x="9.8" y="11" width="3" height="3" fill="#ffb900"/></svg>
<svg class="b" style="left:1402.8px;top:850.2px;" width="18" height="18" viewBox="0 0 18 18"><path d="M9 1l7 4v8l-7 4-7-4V5z" fill="#4c5158"/><path d="M9 4.2L13.6 12H4.4z" fill="#a9b0b8"/></svg>
<div class="b" style="left:1437px;top:850px;width:19px;height:19px;background:#1c6fd4;border-radius:2px;"></div>
<svg class="b" style="left:1439.5px;top:854.5px;" width="14" height="10" viewBox="0 0 14 10"><path d="M1 9L4.6 1h2.6L3.6 9zM7 9L10.6 1h2.6L9.6 9z" fill="#fff"/></svg>
<div class="b" style="left:1471px;top:850px;width:19px;height:19px;background:#16a332;border-radius:2px;"></div>
<div class="b" style="left:1473.7px;top:852.7px;width:13.6px;height:13.6px;background:#f3fff4;border-radius:50%;"></div>
<svg class="b" style="left:1474.5px;top:853.5px;" width="12" height="12" viewBox="0 0 12 12"><path d="M2 2l8 8M10 2l-8 8" stroke="#16a332" stroke-width="2.4"/></svg>
<div class="b" style="left:1499.4px;top:845.2px;width:28.6px;height:28.6px;background:#e6ecf3;border-radius:3px;"></div>
<div class="b" style="left:1504.3px;top:850.1px;width:18px;height:18px;background:conic-gradient(from 60deg,#e8453c 0 33%,#f9bb2d 0 50%,#4aae54 0 83%,#e8453c 0);border-radius:50%;"></div>
<div class="b" style="left:1509.2px;top:855px;width:8.2px;height:8.2px;background:#4a8af4;border-radius:50%;border:1.3px solid #fff;box-sizing:border-box;"></div>
<div class="b" style="left:1515.6px;top:846px;width:10.4px;height:10.4px;background:radial-gradient(circle,#e9a514 0%,#7a430f 55%,#231813 100%);border-radius:50%;"></div>
<div class="b" style="left:1508px;top:871.6px;width:11px;height:2px;background:#1a6fd6;border-radius:1px;"></div>
<svg class="b" style="left:1615.5px;top:857.2px;" width="9" height="6" viewBox="0 0 9 6"><path d="M1 5L4.5 1.5L8 5" fill="none" stroke="#3a3e48" stroke-width="1.4"/></svg>
<svg class="b" style="left:1637.8px;top:853.9px;" width="14" height="11" viewBox="0 0 14 11"><path d="M3.4 9.6a2.8 2.8 0 0 1-.2-5.6 3.9 3.9 0 0 1 7.4.6 2.6 2.6 0 0 1 .6 5" fill="none" stroke="#50545e" stroke-width="1.2"/><circle cx="10.4" cy="8" r="2.8" fill="#e8a020"/></svg>
<svg class="b" style="left:1665.2px;top:852.6px;" width="9" height="14" viewBox="0 0 9 14"><rect x="2.6" y="1" width="3.8" height="7.6" rx="1.9" fill="#2d7fe0"/><path d="M1 6.4a3.5 3.5 0 0 0 7 0M4.5 10v3" fill="none" stroke="#2d7fe0" stroke-width="1.1"/></svg>
<span class="t" style="left:1690.49px;top:847.47px;font-size:9.6px;line-height:12px;color:#50545f;transform:scaleX(0.8964);">ENG</span>
<span class="t" style="left:1694.42px;top:859.87px;font-size:9.6px;line-height:12px;color:#50545f;transform:scaleX(1.1095);">IN</span>
<svg class="b" style="left:1720.6px;top:854.3px;" width="14" height="11" viewBox="0 0 14 11"><g fill="none" stroke="#3f434d" stroke-width="1.2"><path d="M1 4a8.6 8.6 0 0 1 12 0M3 6.4a5.6 5.6 0 0 1 8 0M5 8.6a2.8 2.8 0 0 1 4 0"/></g><circle cx="7" cy="10" r="1" fill="#3f434d"/></svg>
<svg class="b" style="left:1740.9px;top:854.3px;" width="13" height="11" viewBox="0 0 13 11"><path d="M1 4h2.4L6.4 1.4v8.2L3.4 7H1z" fill="none" stroke="#3f434d" stroke-width="1.1" stroke-linejoin="round"/><path d="M8.4 3.4a3 3 0 0 1 0 4.2M10.2 1.8a5.4 5.4 0 0 1 0 7.4" fill="none" stroke="#3f434d" stroke-width="1.1"/></svg>
<svg class="b" style="left:1759.2px;top:854.2px;" width="16" height="10" viewBox="0 0 16 10"><rect x=".8" y="1.8" width="13.6" height="7.6" rx="2" fill="#2e8b3a"/><rect x="14.2" y="3.8" width="1.4" height="2.4" fill="#3f434d"/><path d="M7.2 0v3.6M5.6 2.2l1.6 1.6 1.6-1.6" stroke="#1c2a1c" stroke-width="1" fill="none"/></svg>
<span class="t" style="left:1813.34px;top:847.19px;font-size:10.4px;line-height:12px;color:#666a78;transform:scaleX(0.8722);">20:31</span>
<span class="t" style="left:1787.27px;top:859.59px;font-size:10.4px;line-height:12px;color:#666a78;transform:scaleX(0.9163);">12-02-2026</span>
</div>
<div id="panel">
<div class="b" style="left:0px;top:0px;width:585px;height:893px;background:#fafafa;"></div>
<div class="b" style="left:0px;top:0px;width:585px;height:111px;background:#04263e;box-shadow:0 2px 7px rgba(0,0,0,.38);"></div>
<h1 class="t" style="left:14.55px;top:12.98px;font-size:23.7px;line-height:28px;color:#f4f6f8;font-weight:700;transform:scaleX(0.8489);">Data Analytics Feb Batch Class-4</h1>
<svg class="b" style="left:548px;top:21px;" width="18" height="18" viewBox="0 0 18 18"><path d="M2.2 2.2L15.8 15.8M15.8 2.2L2.2 15.8" stroke="#fff" stroke-width="1.7" stroke-linecap="round" fill="none"/></svg>
<span class="t" style="left:50.74px;top:71.54px;font-size:19.2px;line-height:23px;color:#fff;font-weight:700;transform:scaleX(0.983);">Participants</span>
<div class="b" style="left:166px;top:73px;width:32px;height:23px;background:#fff;border-radius:11.5px;"></div>
<span class="t" style="left:173.15px;top:75.66px;font-size:15.4px;line-height:18px;color:#0b2239;transform:scaleX(1.0392);-webkit-text-stroke:.3px #0b2239;">28</span>
<span class="t" style="left:262.66px;top:70.9px;font-size:19.6px;line-height:24px;color:#b5c0c9;transform:scaleX(1.0432);">Chat</span>
<span class="t" style="left:370.77px;top:70.9px;font-size:19.6px;line-height:24px;color:#b5c0c9;transform:scaleX(1.0739);">Notes</span>
<div class="b" style="left:29px;top:107.5px;width:190px;height:3.5px;background:#fff;border-radius:3px 3px 0 0;"></div>
<div class="b" style="left:13px;top:127px;width:426px;height:49px;background:#fff;border-radius:7px;border:1px solid #dcdcdc;box-sizing:border-box;"></div>
<span class="t" style="left:28.59px;top:141.32px;font-size:18.7px;line-height:22px;color:#c4c4c4;transform:scaleX(1.0719);">Search participant</span>
<svg class="b" style="left:402px;top:138px;" width="26" height="26" viewBox="0 0 26 26"><g fill="none" stroke="#111" stroke-width="1.35" stroke-linecap="round"><circle cx="11.5" cy="11.8" r="8"/><path d="M17.4 17.6L21.6 21.6"/></g></svg>
<div class="b" style="left:451px;top:127px;width:54px;height:49px;background:#fff;border-radius:7px;border:1px solid #dcdcdc;box-sizing:border-box;"></div>
<svg class="b" style="left:464px;top:138px;" width="28" height="28" viewBox="0 0 28 28"><g fill="none" stroke="#0b2a43" stroke-width="1.7" stroke-linecap="round" stroke-linejoin="round"><path d="M7.8 3.8V23M3.4 18.8L7.8 23.4L12.2 18.8"/></g></svg>
<span class="t" style="left:480.49px;top:137.6px;font-size:12.4px;line-height:15px;color:#0b2a43;font-weight:700;transform:scaleX(1.0097);">A</span>
<span class="t" style="left:480.9px;top:150.2px;font-size:12.4px;line-height:15px;color:#0b2a43;font-weight:700;transform:scaleX(1.0806);">Z</span>
<div class="b" style="left:517px;top:127px;width:55px;height:49px;background:#fff;border-radius:7px;border:1px solid #dcdcdc;box-sizing:border-box;"></div>
<svg class="b" style="left:531px;top:136px;" width="28" height="28" viewBox="0 0 28 28"><path d="M2.6 2.6H25L16.2 13.6V22.4L11.6 25.4V13.6Z" fill="none" stroke="#0b2a43" stroke-width="1.7" stroke-linejoin="round"/></svg>
<div class="row">
<div class="b" style="left:22px;top:213px;width:51px;height:51px;background:#846d96;border-radius:50%;"></div>
<span class="t" style="left:32.96px;top:226.49px;font-size:20.5px;line-height:25px;color:#fff;transform:scaleX(1.0636);">AA</span>
<span class="t" style="left:88.23px;top:212.47px;font-size:19.7px;line-height:24px;color:#000;transform:scaleX(0.9252);-webkit-text-stroke:.3px #000;">aa</span>
<span class="t" style="left:88.02px;top:243.62px;font-size:18.4px;line-height:22px;color:#555;transform:scaleX(0.9889);">Joined a few secs ago</span>
<div class="b" style="left:124px;top:210px;width:41px;height:24px;background:#fff;border-radius:5px;box-shadow:0 1px 3px rgba(0,0,0,.22);"></div>
<span class="t" style="left:132.09px;top:213.02px;font-size:15.8px;line-height:19px;color:#0b1f33;transform:scaleX(1.1278);">Me</span>
<svg class="b" style="left:458.8px;top:226.3px;" width="6" height="20" viewBox="0 0 6 20"><g fill="#2b2b2b"><circle cx="3" cy="3.4" r="1.75"/><circle cx="3" cy="10" r="1.75"/><circle cx="3" cy="16.6" r="1.75"/></g></svg>
<svg class="b" style="left:504px;top:226.2px;" width="24" height="24" viewBox="0 0 24 24"><g fill="none" stroke="#111" stroke-width="1.5" stroke-linecap="round"><rect x="8.2" y="1.2" width="7.6" height="15.2" rx="3.8"/><path d="M5.2 11.6v1a6.8 6.8 0 0 0 13.6 0v-1"/><path d="M12 19.6v3.2"/><path d="M21.8 2L2.3 21.6" stroke="#fafafa" stroke-width="1.72" stroke-linecap="butt" transform="translate(1.1 1.1)"/><path d="M22.8 1L1.3 22.6"/></g></svg>
<div class="b" style="left:0px;top:282px;width:563px;height:1px;background:#e4e4e4;"></div>
</div>
<div class="row">
<div class="b" style="left:22px;top:298.8px;width:51px;height:51px;background:#cf8f8f;border-radius:50%;"></div>
<span class="t" style="left:38.96px;top:312.29px;font-size:20.5px;line-height:25px;color:#fff;">M</span>
<span class="t" style="left:87.21px;top:298.27px;font-size:19.7px;line-height:24px;color:#000;transform:scaleX(1.1098);-webkit-text-stroke:.3px #000;">Mkri9906@gmail.com</span>
<span class="t" style="left:88.01px;top:329.42px;font-size:18.4px;line-height:22px;color:#555;transform:scaleX(1.0066);">Joined 1 min ago</span>
<svg class="b" style="left:458.8px;top:312.1px;" width="6" height="20" viewBox="0 0 6 20"><g fill="#2b2b2b"><circle cx="3" cy="3.4" r="1.75"/><circle cx="3" cy="10" r="1.75"/><circle cx="3" cy="16.6" r="1.75"/></g></svg>
<svg class="b" style="left:504px;top:312px;" width="24" height="24" viewBox="0 0 24 24"><g fill="none" stroke="#111" stroke-width="1.5" stroke-linecap="round"><rect x="8.2" y="1.2" width="7.6" height="15.2" rx="3.8"/><path d="M5.2 11.6v1a6.8 6.8 0 0 0 13.6 0v-1"/><path d="M12 19.6v3.2"/><path d="M21.8 2L2.3 21.6" stroke="#fafafa" stroke-width="1.72" stroke-linecap="butt" transform="translate(1.1 1.1)"/><path d="M22.8 1L1.3 22.6"/></g></svg>
<div class="b" style="left:0px;top:368px;width:563px;height:1px;background:#e4e4e4;"></div>
</div>
<div class="row">
<div class="b" style="left:22px;top:384.6px;width:51px;height:51px;background:#4f77a5;border-radius:50%;"></div>
<span class="t" style="left:41.86px;top:398.09px;font-size:20.5px;line-height:25px;color:#fff;">3</span>
<span class="t" style="left:88.16px;top:384.07px;font-size:19.7px;line-height:24px;color:#000;transform:scaleX(1.1146);-webkit-text-stroke:.3px #000;">3skill</span>
<span class="t" style="left:88.01px;top:415.22px;font-size:18.4px;line-height:22px;color:#555;">Joined 9 mins ago</span>
<div class="b" style="left:151px;top:381.6px;width:52px;height:25px;background:#fff;border-radius:5px;box-shadow:0 1px 3px rgba(0,0,0,.22);"></div>
<span class="t" style="left:160.15px;top:384.92px;font-size:15.8px;line-height:19px;color:#0b1f33;transform:scaleX(1.0426);">Host</span>
<svg class="b" style="left:458.8px;top:397.9px;" width="6" height="20" viewBox="0 0 6 20"><g fill="#2b2b2b"><circle cx="3" cy="3.4" r="1.75"/><circle cx="3" cy="10" r="1.75"/><circle cx="3" cy="16.6" r="1.75"/></g></svg>
<div class="b" style="left:477px;top:371.8px;width:78px;height:78px;background:#ebf2fb;border-radius:50%;"></div>
<div class="b" style="left:488px;top:382.8px;width:56px;height:56px;background:#e0eaf7;border-radius:50%;"></div>
<div class="b" style="left:499px;top:393.8px;width:34px;height:34px;background:#c7d9f2;border-radius:50%;"></div>
<svg class="b" style="left:504px;top:398.1px;" width="24" height="24" viewBox="0 0 24 24"><g fill="none" stroke="#0a0f1a" stroke-width="1.6" stroke-linecap="round"><rect x="8" y="1.8" width="8" height="14" rx="4" fill="#a9c8f0"/><path d="M5 11.4v1a7 7 0 0 0 14 0v-1"/><path d="M12 19.6v3.4"/></g></svg>
<svg class="b" style="left:379px;top:396.6px;" width="27" height="27" viewBox="0 0 27 27"><g fill="none" stroke="#485c86" stroke-width="1.8" stroke-linecap="round" stroke-linejoin="round"><path d="M11.4 3.4H4.4a2.6 2.6 0 0 0-2.6 2.6v10.6a2.6 2.6 0 0 0 2.6 2.6h17a2.6 2.6 0 0 0 2.6-2.6v-7"/><path d="M6.6 23.6h13"/><path d="M14.4 14.6c.2-4.2 2.4-7.4 6-8.8"/></g><path d="M17.2 3.2l7-.2-2.8 6.4z" fill="#485c86"/></svg>
<div class="b" style="left:0px;top:454px;width:563px;height:1px;background:#e4e4e4;"></div>
</div>
<div class="row">
<div class="b" style="left:22px;top:470.4px;width:51px;height:51px;background:#7b9786;border-radius:50%;"></div>
<span class="t" style="left:32.96px;top:483.89px;font-size:20.5px;line-height:25px;color:#fff;transform:scaleX(1.0486);">AC</span>
<span class="t" style="left:88.96px;top:469.87px;font-size:19.7px;line-height:24px;color:#000;transform:scaleX(1.0753);-webkit-text-stroke:.3px #000;">ARYAN KUMAR CHOUBEY</span>
<span class="t" style="left:88.01px;top:501.02px;font-size:18.4px;line-height:22px;color:#555;">Joined 13 mins ago</span>
<svg class="b" style="left:458.8px;top:483.7px;" width="6" height="20" viewBox="0 0 6 20"><g fill="#2b2b2b"><circle cx="3" cy="3.4" r="1.75"/><circle cx="3" cy="10" r="1.75"/><circle cx="3" cy="16.6" r="1.75"/></g></svg>
<svg class="b" style="left:504px;top:483.6px;" width="24" height="24" viewBox="0 0 24 24"><g fill="none" stroke="#111" stroke-width="1.5" stroke-linecap="round"><rect x="8.2" y="1.2" width="7.6" height="15.2" rx="3.8"/><path d="M5.2 11.6v1a6.8 6.8 0 0 0 13.6 0v-1"/><path d="M12 19.6v3.2"/><path d="M21.8 2L2.3 21.6" stroke="#fafafa" stroke-width="1.72" stroke-linecap="butt" transform="translate(1.1 1.1)"/><path d="M22.8 1L1.3 22.6"/></g></svg>
<div class="b" style="left:0px;top:540px;width:563px;height:1px;background:#e4e4e4;"></div>
</div>
<div class="row">
<div class="b" style="left:22px;top:556.2px;width:51px;height:51px;background:#e0a9d5;border-radius:50%;"></div>
<span class="t" style="left:41.24px;top:569.69px;font-size:20.5px;line-height:25px;color:#fff;">T</span>
<span class="t" style="left:88.67px;top:555.67px;font-size:19.7px;line-height:24px;color:#000;transform:scaleX(1.0947);-webkit-text-stroke:.3px #000;">tanvipatil977@gmail.com</span>
<span class="t" style="left:88.01px;top:586.82px;font-size:18.4px;line-height:22px;color:#555;">Joined 15 mins ago</span>
<svg class="b" style="left:458.8px;top:569.5px;" width="6" height="20" viewBox="0 0 6 20"><g fill="#2b2b2b"><circle cx="3" cy="3.4" r="1.75"/><circle cx="3" cy="10" r="1.75"/><circle cx="3" cy="16.6" r="1.75"/></g></svg>
<svg class="b" style="left:504px;top:569.4px;" width="24" height="24" viewBox="0 0 24 24"><g fill="none" stroke="#111" stroke-width="1.5" stroke-linecap="round"><rect x="8.2" y="1.2" width="7.6" height="15.2" rx="3.8"/><path d="M5.2 11.6v1a6.8 6.8 0 0 0 13.6 0v-1"/><path d="M12 19.6v3.2"/><path d="M21.8 2L2.3 21.6" stroke="#fafafa" stroke-width="1.72" stroke-linecap="butt" transform="translate(1.1 1.1)"/><path d="M22.8 1L1.3 22.6"/></g></svg>
<div class="b" style="left:0px;top:626px;width:563px;height:1px;background:#e4e4e4;"></div>
</div>
<div class="row">
<div class="b" style="left:22px;top:642px;width:51px;height:51px;background:#cdb684;border-radius:50%;"></div>
<span class="t" style="left:40.67px;top:655.49px;font-size:20.5px;line-height:25px;color:#fff;">S</span>
<span class="t" style="left:88.02px;top:641.47px;font-size:19.7px;line-height:24px;color:#000;transform:scaleX(1.0915);-webkit-text-stroke:.3px #000;">Srushti</span>
<span class="t" style="left:88.01px;top:672.62px;font-size:18.4px;line-height:22px;color:#555;">Joined 17 mins ago</span>
<svg class="b" style="left:458.8px;top:655.3px;" width="6" height="20" viewBox="0 0 6 20"><g fill="#2b2b2b"><circle cx="3" cy="3.4" r="1.75"/><circle cx="3" cy="10" r="1.75"/><circle cx="3" cy="16.6" r="1.75"/></g></svg>
<svg class="b" style="left:504px;top:655.2px;" width="24" height="24" viewBox="0 0 24 24"><g fill="none" stroke="#111" stroke-width="1.5" stroke-linecap="round"><rect x="8.2" y="1.2" width="7.6" height="15.2" rx="3.8"/><path d="M5.2 11.6v1a6.8 6.8 0 0 0 13.6 0v-1"/><path d="M12 19.6v3.2"/><path d="M21.8 2L2.3 21.6" stroke="#fafafa" stroke-width="1.72" stroke-linecap="butt" transform="translate(1.1 1.1)"/><path d="M22.8 1L1.3 22.6"/></g></svg>
<div class="b" style="left:0px;top:712px;width:563px;height:1px;background:#e4e4e4;"></div>
</div>
<div class="row">
<div class="b" style="left:22px;top:727.8px;width:51px;height:51px;background:#4da680;border-radius:50%;"></div>
<span class="t" style="left:40.66px;top:741.29px;font-size:20.5px;line-height:25px;color:#fff;">Y</span>
<span class="t" style="left:88.58px;top:727.27px;font-size:19.7px;line-height:24px;color:#000;transform:scaleX(0.9609);-webkit-text-stroke:.3px #000;">Yash</span>
<span class="t" style="left:88.01px;top:758.42px;font-size:18.4px;line-height:22px;color:#555;">Joined 19 mins ago</span>
<svg class="b" style="left:458.8px;top:741.1px;" width="6" height="20" viewBox="0 0 6 20"><g fill="#2b2b2b"><circle cx="3" cy="3.4" r="1.75"/><circle cx="3" cy="10" r="1.75"/><circle cx="3" cy="16.6" r="1.75"/></g></svg>
<svg class="b" style="left:504px;top:741px;" width="24" height="24" viewBox="0 0 24 24"><g fill="none" stroke="#111" stroke-width="1.5" stroke-linecap="round"><rect x="8.2" y="1.2" width="7.6" height="15.2" rx="3.8"/><path d="M5.2 11.6v1a6.8 6.8 0 0 0 13.6 0v-1"/><path d="M12 19.6v3.2"/><path d="M21.8 2L2.3 21.6" stroke="#fafafa" stroke-width="1.72" stroke-linecap="butt" transform="translate(1.1 1.1)"/><path d="M22.8 1L1.3 22.6"/></g></svg>
<div class="b" style="left:0px;top:797px;width:563px;height:1px;background:#e4e4e4;"></div>
</div>
<div class="row">
<div class="b" style="left:22px;top:813.6px;width:51px;height:51px;background:#6b6a45;border-radius:50%;"></div>
<span class="t" style="left:40.67px;top:827.09px;font-size:20.5px;line-height:25px;color:#fff;">S</span>
<span class="t" style="left:88.41px;top:813.07px;font-size:19.7px;line-height:24px;color:#000;transform:scaleX(1.0743);-webkit-text-stroke:.3px #000;">sparshnagta16</span>
<span class="t" style="left:88.01px;top:844.22px;font-size:18.4px;line-height:22px;color:#555;">Joined 21 mins ago</span>
<svg class="b" style="left:458.8px;top:826.9px;" width="6" height="20" viewBox="0 0 6 20"><g fill="#2b2b2b"><circle cx="3" cy="3.4" r="1.75"/><circle cx="3" cy="10" r="1.75"/><circle cx="3" cy="16.6" r="1.75"/></g></svg>
<div class="b" style="left:0px;top:883px;width:563px;height:1px;background:#e4e4e4;"></div>
</div>
</div>
<div id="toolbar">
<div class="b" style="left:493px;top:804px;width:810px;height:79px;background:#18293a;border-radius:39.5px;box-shadow:0 1px 4px rgba(0,0,0,.18);"></div>
<div class="b" style="left:510.8px;top:834.4px;width:17.6px;height:17.6px;background:#e5384f;border-radius:50%;"></div>
<span class="t" style="left:550.15px;top:830.35px;font-size:21.2px;line-height:25px;color:#fff;transform:scaleX(0.9819);">27 : 44</span>
<div class="b" style="left:631.5px;top:830px;width:1px;height:28px;background:#2c475d;"></div>
<div class="b" style="left:652px;top:814.5px;width:102px;height:58px;background:#25323f;border-radius:29px;"></div>
<svg class="b" style="left:669.3px;top:835px;" width="18" height="16" viewBox="0 0 18 16"><path d="M.7 12.4L9 3.4L17.3 12.4" fill="none" stroke="#9ba4ac" stroke-width="1.5"/></svg>
<div class="b" style="left:696px;top:814.9px;width:58px;height:58px;background:#a7324a;border-radius:50%;"></div>
<svg class="b" style="left:711px;top:831px;" width="28" height="26" viewBox="0 0 28 26"><rect x="1.3" y="4.7" width="19.8" height="16.4" rx="2.6" fill="#fff"/><rect x="22.5" y="6.2" width="3.9" height="12.9" rx="1.7" fill="#fff"/><path d="M1.8 24.2L22.4 3.6" stroke="#a7324a" stroke-width="2.2"/><path d="M1 22.7L21.5 2.2" stroke="#fff" stroke-width="1.3" stroke-linecap="round"/></svg>
<div class="b" style="left:766px;top:814.5px;width:102px;height:58px;background:#25323f;border-radius:29px;"></div>
<svg class="b" style="left:783.4px;top:835px;" width="18" height="16" viewBox="0 0 18 16"><path d="M.7 12.4L9 3.4L17.3 12.4" fill="none" stroke="#9ba4ac" stroke-width="1.5"/></svg>
<div class="b" style="left:810px;top:814.9px;width:58px;height:58px;background:#a7324a;border-radius:50%;"></div>
<svg class="b" style="left:826px;top:830px;" width="26" height="28" viewBox="0 0 26 28"><rect x="9" y="1.1" width="8.4" height="17" rx="4.2" fill="#fff"/><path d="M5.8 12.6v1a7.6 7.6 0 0 0 15.2 0v-1M13.4 21.2v3.8" fill="none" stroke="#fff" stroke-width="1.4" stroke-linecap="round"/><path d="M3.3 26L25.7 2" stroke="#a7324a" stroke-width="2.2"/><path d="M2.4 25L24.9 1" stroke="#fff" stroke-width="1.3" stroke-linecap="round"/></svg>
<div class="b" style="left:880.2px;top:814.7px;width:58.6px;height:58.6px;background:#2c3d4c;border-radius:50%;"></div>
<svg class="b" style="left:895px;top:832px;" width="29" height="24" viewBox="0 0 29 24"><rect x="1.1" y="1.4" width="26.9" height="20.7" rx="2.6" fill="#fff"/><path d="M6.6 19.2c-.9-5.4 2.2-9.8 9-10.6l-.5-3.6 8 3.6-6.2 6-.5-3.4c-4.8.2-8 2.6-9.8 8z" fill="#1f2f3d"/></svg>
<div class="b" style="left:950.5px;top:815px;width:58.2px;height:58.2px;background:#0062e1;border-radius:50%;"></div>
<svg class="b" style="left:964px;top:830px;" width="32" height="28" viewBox="0 0 32 28"><g fill="#fff"><circle cx="21.7" cy="9.8" r="4"/><path d="M19 15.4c6-.6 10.2 1.6 10.6 5.2 0 1.6-2.8 2.8-6.4 3z"/><g stroke="#0062e1" stroke-width="1.3"><circle cx="12.7" cy="8.3" r="6.3"/><path d="M2 21c0-4 4.6-6.4 10.8-6.4s10.8 2.4 10.8 6.4c0 2.4-4.8 4-10.8 4s-10.8-1.6-10.8-4z"/></g></g></svg>
<div class="b" style="left:984px;top:806.8px;width:30.2px;height:24px;background:#fff;border-radius:12px;"></div>
<span class="t" style="left:990.09px;top:808.93px;font-size:15.2px;line-height:18px;color:#0b2239;transform:scaleX(1.0593);-webkit-text-stroke:.25px #0b2239;">28</span>
<div class="b" style="left:1020.9px;top:814.8px;width:58.4px;height:58.4px;background:#2c3d4c;border-radius:50%;"></div>
<svg class="b" style="left:1036px;top:831px;" width="29" height="27" viewBox="0 0 29 27"><path d="M3.4 1h21.8a2 2 0 0 1 2 2v15.6a2 2 0 0 1-2 2H7.8L1.4 25.4V3a2 2 0 0 1 2-2z" fill="#fff"/><path d="M6.8 7.9h14.6M6.8 13.3h8.4" stroke="#2c3d4c" stroke-width="1.7" fill="none"/></svg>
<div class="b" style="left:1090.9px;top:814.8px;width:58.4px;height:58.4px;background:#2c3d4c;border-radius:50%;"></div>
<svg class="b" style="left:1104px;top:828px;" width="32" height="32" viewBox="0 0 32 32"><g fill="#fff"><circle cx="20" cy="20.4" r="11"/><rect x="1.3" y="5.4" width="2.9" height="9" rx="1.45"/><rect x="4.5" y="2" width="2.9" height="11" rx="1.45"/><rect x="7.7" y="1" width="2.9" height="11" rx="1.45"/><rect x="10.9" y="2.4" width="2.9" height="10" rx="1.45"/><path d="M1.3 9.6h12.5v2.6l3.2-3 1.8 1.6-6 7c-1.8 1.4-5.6 1.4-8 0s-3.5-3.4-3.5-5.8z"/></g><g fill="#2c3d4c"><circle cx="16.3" cy="17.4" r="1.3"/><circle cx="23.7" cy="17.4" r="1.3"/><path d="M15 22.4c1.2 2 3 3 5 3s3.8-1 5-3l-1.2-.6c-1 1.4-2.2 2.2-3.8 2.2s-2.8-.8-3.8-2.2z"/></g></svg>
<div class="b" style="left:1160.9px;top:814.8px;width:58.4px;height:58.4px;background:#2c3d4c;border-radius:50%;"></div>
<svg class="b" style="left:1176.1px;top:838.4px;" width="28" height="10" viewBox="0 0 28 10"><g fill="#fff"><circle cx="4.2" cy="5" r="2.6"/><circle cx="14" cy="5" r="2.6"/><circle cx="23.8" cy="5" r="2.6"/></g></svg>
<div class="b" style="left:1231.2px;top:814.9px;width:58.4px;height:58.4px;background:#a7324a;border-radius:50%;"></div>
<svg class="b" style="left:1246.4px;top:837px;" width="28" height="14" viewBox="0 0 28 14"><path d="M.9 8.6C2.8 3.6 8 1.2 14 1.2s11.2 2.4 13.1 7.4c.3 1.2.1 2.6-.5 3.3-1 .6-4.2 0-5.6-.6-.9-.5-1.2-1.4-1.3-2.4l-.2-2.1c-1.8-.6-3.6-.9-5.5-.9s-3.7.3-5.5.9l-.2 2.1c-.1 1-.4 1.9-1.3 2.4-1.4.6-4.6 1.2-5.6.6C.8 11.2.6 9.8.9 8.6z" fill="#fff"/></svg>
</div>
<div id="topline"></div>
</body>
</html>
